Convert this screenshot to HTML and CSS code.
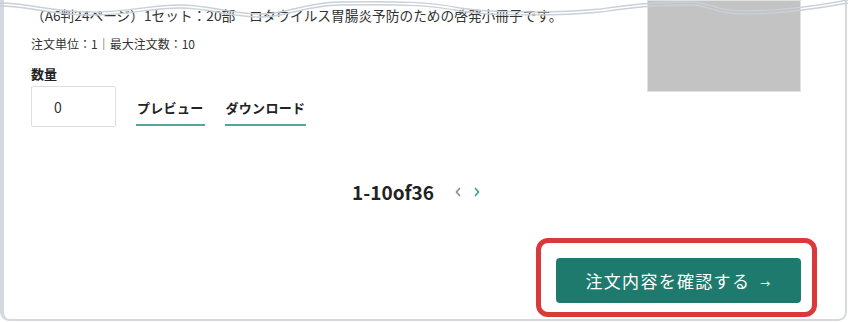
FILE: index.html
```html
<!DOCTYPE html>
<html lang="ja">
<head>
  <meta charset="UTF-8">
  <meta name="viewport" content="width=device-width, initial-scale=1.0">
  <title>注文内容の確認</title>
  <link rel="stylesheet" href="styles.css">
</head>
<body>
  <div class="card">
    <svg class="cut" width="848" height="20" viewBox="0 0 848 20">
      <path d="M0,3 C30,3 50,12 90,12 C130,12 150,5 180,5 C210,5 230,14 260,14 C290,14 300,3 340,2 C400,1 430,2 460,8 C490,13 560,13 600,9 C630,5 650,2 690,2 C710,2 715,11 745,11 C780,11 810,7 848,0" />
      <path d="M0,6 C30,6 50,15 90,15 C130,15 150,8 180,8 C210,8 230,17 260,17 C290,17 300,6 340,5 C400,4 430,5 460,11 C490,16 560,16 600,12 C630,8 650,5 690,5 C710,5 715,14 745,14 C780,14 810,10 848,3" />
    </svg>

    <div class="item">
      <div class="item-info">
        <p class="desc">（A6判24ページ）1セット：20部　ロタウイルス胃腸炎予防のための啓発小冊子です。</p>
        <p class="note">注文単位：1｜最大注文数：10</p>
        <label class="qty-label" for="qty">数量</label>
        <div class="qty-row">
          <input id="qty" class="qty" type="text" value="0">
          <a class="link" href="#">プレビュー</a>
          <a class="link" href="#">ダウンロード</a>
        </div>
      </div>
      <div class="thumb"></div>
    </div>

    <div class="pager">
      <span class="pager-count">1-10of36</span>
      <svg class="chev" width="7" height="10" viewBox="0 0 7 10"><polyline points="5,1 1.5,5 5,9" stroke="#8a8a8a" /></svg>
      <svg class="chev" width="7" height="10" viewBox="0 0 7 10"><polyline points="2,1 5.5,5 2,9" stroke="#3a9c92" /></svg>
    </div>

    <div class="actions">
      <div class="btn-wrap">
        <button class="confirm">注文内容を確認する<span class="arrow">→</span></button>
        <span class="highlight"></span>
      </div>
    </div>
  </div>
</body>
</html>
```

FILE: styles.css
```css
body {
  margin: 0;
  background: #fff;
  font-family: "Noto Sans CJK JP", "Noto Sans", sans-serif;
  color: #222;
}
.card {
  position: relative;
  box-sizing: border-box;
  height: 321px;
  margin-right: 1px;
  padding: 5px 44px 15px 27px;
  background: #fff;
  border: 2px solid #d5d9df;
  border-left-width: 4px;
  border-top: 0;
  border-radius: 0 0 9px 9px;
}
.cut {
  position: absolute;
  top: 0;
  left: -4px;
  fill: none;
  stroke: #c9d0d8;
  stroke-width: 1.4;
}
.item {
  display: flex;
  justify-content: space-between;
  margin-top: -5px;
}
.item-info {
  padding-top: 5px;
}
.desc {
  margin: 0;
  font-size: 13.7px;
  line-height: 20px;
  color: #333;
}
.note {
  margin: 10px 0 0;
  font-size: 12px;
  line-height: 18px;
  color: #333;
}
.qty-label {
  display: block;
  margin-top: 12px;
  font-size: 13px;
  font-weight: bold;
  line-height: 18px;
}
.qty-row {
  display: flex;
  align-items: flex-end;
  gap: 20px;
  margin-top: 3px;
}
.qty {
  box-sizing: border-box;
  width: 85px;
  height: 41px;
  padding: 0 0 0 22px;
  border: 1px solid #dedede;
  border-radius: 2px;
  font-family: inherit;
  font-size: 14px;
  color: #333;
}
.link {
  display: inline-block;
  margin-bottom: 1px;
  padding: 0 1px 7px;
  border-bottom: 2px solid #4fa79d;
  font-size: 13px;
  font-weight: bold;
  line-height: 18px;
  letter-spacing: 0.3px;
  color: #222;
  text-decoration: none;
}
.thumb {
  width: 152px;
  height: 90px;
  background: #c3c3c3;
  border: 1px solid #e2e2e2;
}
.pager {
  display: flex;
  align-items: center;
  justify-content: center;
  margin-top: 53px;
}
.pager-count {
  font-size: 19px;
  font-weight: bold;
  line-height: 24px;
  letter-spacing: 0;
  margin-right: 21px;
}
.chev {
  fill: none;
  stroke-width: 1.6;
  margin-right: 11px;
}
.chev:last-child {
  margin-right: 0;
}
.actions {
  display: flex;
  justify-content: flex-end;
  margin-top: 54px;
}
.btn-wrap {
  position: relative;
}
.confirm {
  display: block;
  width: 245px;
  height: 45px;
  border: 0;
  border-radius: 4px;
  background: #1f7a6e;
  color: #fff;
  font-family: inherit;
  font-size: 17px;
  letter-spacing: 1.3px;
}
.arrow {
  margin-left: 10px;
  font-size: 10px;
}
.highlight {
  position: absolute;
  top: -20px;
  left: -20px;
  right: -16px;
  bottom: -14px;
  border: 5px solid #d8393b;
  border-radius: 12px;
}
```
